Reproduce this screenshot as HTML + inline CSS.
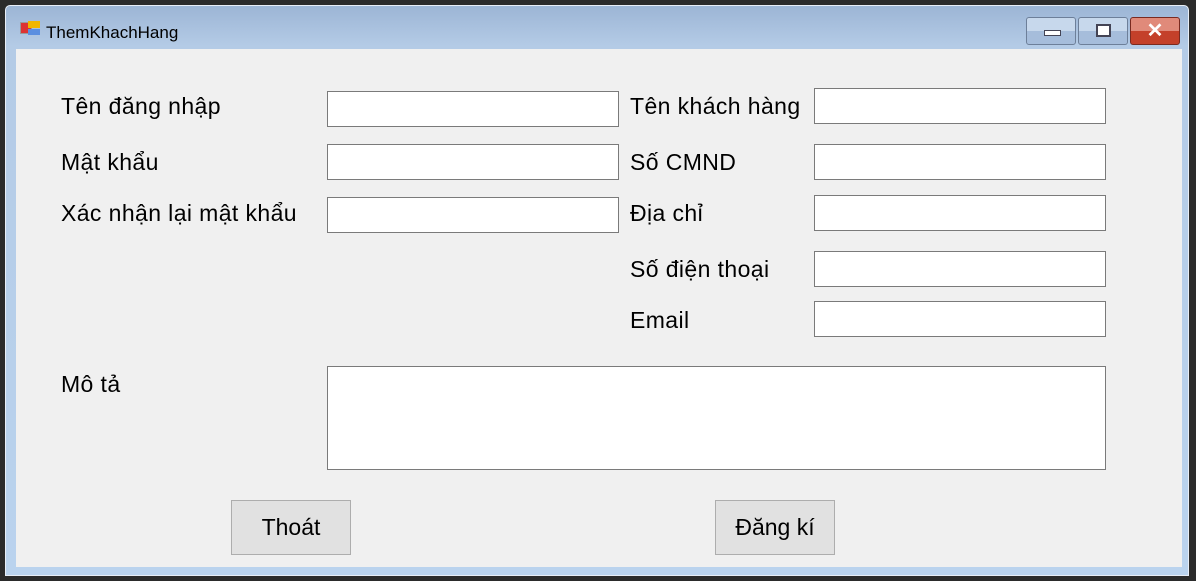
<!DOCTYPE html>
<html><head><meta charset="utf-8"><style>
body{margin:0;width:1196px;height:581px;overflow:hidden;background:#2b2b2b;font-family:"Liberation Sans",sans-serif;position:relative}
.win{position:absolute;left:5px;top:5px;width:1184px;height:571px;background:linear-gradient(#9cb5d5 0,#b4cbe6 40px,#bad3ee 100%);border:1px solid #e8eef7;box-sizing:border-box;border-radius:5px 5px 0 0}
.client{position:absolute;left:16px;top:49px;width:1166px;height:518px;background:#f0f0f0}
.t{position:absolute;font-size:23px;line-height:22px;letter-spacing:0.4px;color:#000;white-space:nowrap}
.in{position:absolute;background:#fff;border:1px solid #7a7a7a;box-sizing:border-box}
.btn{position:absolute;background:#e1e1e1;border:1px solid #adadad;box-sizing:border-box;font-size:23px;display:flex;align-items:center;justify-content:center}
.cb{position:absolute;top:17px;height:28px;border:1px solid #6d7f99;border-radius:3px;box-sizing:border-box;background:linear-gradient(#c7d8ec 50%,#a6bddb 50%)}
</style></head><body>
<div class="win"></div>
<div style="position:absolute;left:20px;top:22px;width:10px;height:10px;background:#d33;border:1px solid #999"></div>
<div style="position:absolute;left:28px;top:21px;width:12px;height:7px;background:#f2b600"></div>
<div style="position:absolute;left:28px;top:29px;width:12px;height:6px;background:#5b8fe0"></div>
<div style="position:absolute;left:46px;top:23px;font-size:17px;color:#000">ThemKhachHang</div>
<div class="cb" style="left:1026px;width:50px"><div style="position:absolute;left:17px;top:12px;width:15px;height:4px;background:#fff;border:1px solid #445"></div></div>
<div class="cb" style="left:1078px;width:50px"><div style="position:absolute;left:17px;top:6px;width:11px;height:9px;border:2px solid #445;background:#fff"></div></div>
<div class="cb" style="left:1130px;width:50px;background:linear-gradient(#e08a7a 50%,#c4402a 50%);border-color:#7a2a20"><div style="position:absolute;left:0;top:0;width:48px;text-align:center;font-size:20px;font-weight:bold;color:#fff;line-height:26px">✕</div></div>
<div class="client"></div>
<div class="t" style="left:61px;top:95px">Tên đăng nhập</div>
<div class="t" style="left:61px;top:151px">Mật khẩu</div>
<div class="t" style="left:61px;top:202px">Xác nhận lại mật khẩu</div>
<div class="t" style="left:61px;top:373px">Mô tả</div>
<div class="t" style="left:630px;top:95px">Tên khách hàng</div>
<div class="t" style="left:630px;top:151px">Số CMND</div>
<div class="t" style="left:630px;top:202px">Địa chỉ</div>
<div class="t" style="left:630px;top:258px">Số điện thoại</div>
<div class="t" style="left:630px;top:309px">Email</div>
<div class="in" style="left:327px;top:91px;width:292px;height:36px"></div>
<div class="in" style="left:327px;top:144px;width:292px;height:36px"></div>
<div class="in" style="left:327px;top:197px;width:292px;height:36px"></div>
<div class="in" style="left:814px;top:88px;width:292px;height:36px"></div>
<div class="in" style="left:814px;top:144px;width:292px;height:36px"></div>
<div class="in" style="left:814px;top:195px;width:292px;height:36px"></div>
<div class="in" style="left:814px;top:251px;width:292px;height:36px"></div>
<div class="in" style="left:814px;top:301px;width:292px;height:36px"></div>
<div class="in" style="left:327px;top:366px;width:779px;height:104px"></div>
<div class="btn" style="left:231px;top:500px;width:120px;height:55px">Thoát</div>
<div class="btn" style="left:715px;top:500px;width:120px;height:55px">Đăng kí</div>
</body></html>
